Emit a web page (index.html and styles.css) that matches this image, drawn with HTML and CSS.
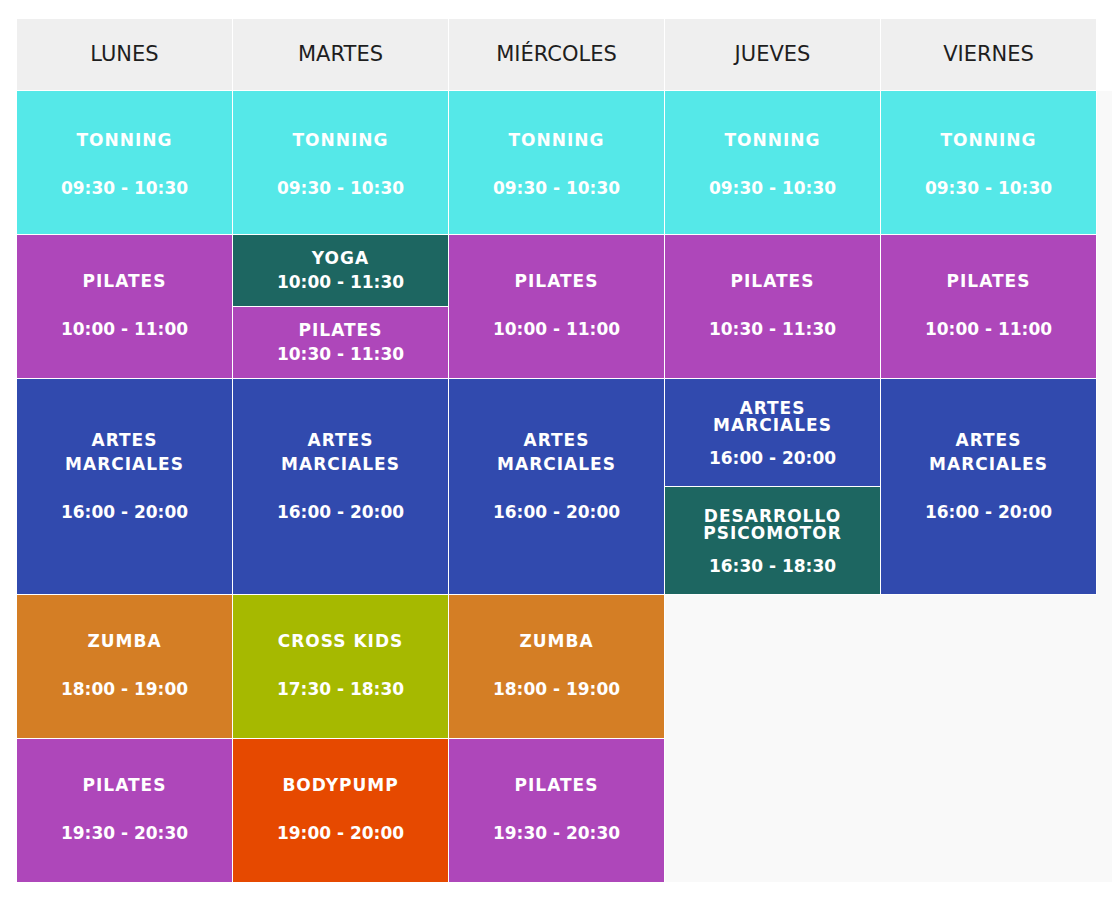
FILE: index.html
```html
<!DOCTYPE html>
<html lang="es">
<head>
<meta charset="utf-8">
<title>Horario de clases</title>
<link rel="stylesheet" href="styles.css">
</head>
<body>
<div class="timetable">
  <div class="days">
    <div class="day">LUNES</div>
    <div class="day">MARTES</div>
    <div class="day">MIÉRCOLES</div>
    <div class="day">JUEVES</div>
    <div class="day">VIERNES</div>
  </div>
  <div class="grid">
    <!-- row 1 -->
    <div class="cell first cyan"><span class="name">TONNING</span><span class="time">09:30 - 10:30</span></div>
    <div class="cell first cyan"><span class="name">TONNING</span><span class="time">09:30 - 10:30</span></div>
    <div class="cell first cyan"><span class="name">TONNING</span><span class="time">09:30 - 10:30</span></div>
    <div class="cell first cyan"><span class="name">TONNING</span><span class="time">09:30 - 10:30</span></div>
    <div class="cell first cyan"><span class="name">TONNING</span><span class="time">09:30 - 10:30</span></div>
    <!-- row 2 -->
    <div class="cell purple"><span class="name">PILATES</span><span class="time">10:00 - 11:00</span></div>
    <div class="cell split">
      <div class="sub teal compact"><span class="name">YOGA</span><span class="time">10:00 - 11:30</span></div>
      <div class="sub purple compact"><span class="name">PILATES</span><span class="time">10:30 - 11:30</span></div>
    </div>
    <div class="cell purple"><span class="name">PILATES</span><span class="time">10:00 - 11:00</span></div>
    <div class="cell purple"><span class="name">PILATES</span><span class="time">10:30 - 11:30</span></div>
    <div class="cell purple"><span class="name">PILATES</span><span class="time">10:00 - 11:00</span></div>
    <!-- row 3 -->
    <div class="cell tall blue"><span class="name">ARTES MARCIALES</span><span class="time">16:00 - 20:00</span></div>
    <div class="cell tall blue"><span class="name">ARTES MARCIALES</span><span class="time">16:00 - 20:00</span></div>
    <div class="cell tall blue"><span class="name">ARTES MARCIALES</span><span class="time">16:00 - 20:00</span></div>
    <div class="cell split">
      <div class="sub blue tight"><span class="name">ARTES MARCIALES</span><span class="time">16:00 - 20:00</span></div>
      <div class="sub teal tight"><span class="name">DESARROLLO PSICOMOTOR</span><span class="time">16:30 - 18:30</span></div>
    </div>
    <div class="cell tall blue"><span class="name">ARTES MARCIALES</span><span class="time">16:00 - 20:00</span></div>
    <!-- row 4 -->
    <div class="cell orange"><span class="name">ZUMBA</span><span class="time">18:00 - 19:00</span></div>
    <div class="cell lime"><span class="name">CROSS KIDS</span><span class="time">17:30 - 18:30</span></div>
    <div class="cell orange"><span class="name">ZUMBA</span><span class="time">18:00 - 19:00</span></div>
    <div class="empty"></div>
    <div class="empty"></div>
    <!-- row 5 -->
    <div class="cell purple"><span class="name">PILATES</span><span class="time">19:30 - 20:30</span></div>
    <div class="cell red"><span class="name">BODYPUMP</span><span class="time">19:00 - 20:00</span></div>
    <div class="cell purple"><span class="name">PILATES</span><span class="time">19:30 - 20:30</span></div>
    <div class="empty"></div>
    <div class="empty"></div>
  </div>
</div>
</body>
</html>
```

FILE: styles.css
```css
html, body {
  margin: 0;
  padding: 0;
  background: #ffffff;
}

body {
  font-family: "DejaVu Sans", "Liberation Sans", sans-serif;
}

.timetable {
  margin: 19px 0 0 17px;
  width: 1095px;
}

.days {
  display: grid;
  grid-template-columns: repeat(5, 216px);
  height: 72px;
}

.day {
  box-sizing: border-box;
  background: #efefef;
  border-right: 1px solid #ffffff;
  border-bottom: 1px solid #ffffff;
  display: flex;
  align-items: center;
  justify-content: center;
  color: #1e1e1e;
  font-size: 21px;
  font-weight: 400;
  padding-bottom: 1px;
}

.grid {
  display: grid;
  grid-template-columns: repeat(5, 216px);
  grid-template-rows: 144px 144px 216px 144px 144px;
  background: #f9f9f9;
  height: 791px;
}

.cell,
.sub {
  box-sizing: border-box;
  display: flex;
  flex-direction: column;
  align-items: center;
  justify-content: center;
  text-align: center;
  color: #ffffff;
  font-weight: 700;
  font-size: 17px;
  line-height: 24px;
  padding: 0 20px 4px;
}

.cell {
  border-right: 1px solid #ffffff;
  border-bottom: 1px solid #ffffff;
}

.cell.first {
  padding-top: 2px;
  padding-bottom: 0;
}

.cell.tall {
  padding-bottom: 22px;
}

.name {
  display: block;
  letter-spacing: 1px;
}

.time {
  display: block;
  margin-top: 24px;
}

.cell.split {
  padding: 0;
  align-items: stretch;
  justify-content: stretch;
}

.sub {
  flex: 1;
}

.sub + .sub {
  border-top: 1px solid #ffffff;
}

.sub.compact {
  padding-bottom: 1px;
}

.sub.compact .time {
  margin-top: 0;
}

.sub.tight {
  padding-bottom: 0;
  padding-top: 4px;
}

.sub.tight .name {
  line-height: 17px;
}

.sub.tight .time {
  margin-top: 12px;
}

.cyan { background: #55e8e8; }
.purple { background: #ae47ba; }
.teal { background: #1d6661; }
.blue { background: #314aae; }
.orange { background: #d47e25; }
.lime { background: #a6b900; }
.red { background: #e64900; }

.empty {
  background: transparent;
}
```
